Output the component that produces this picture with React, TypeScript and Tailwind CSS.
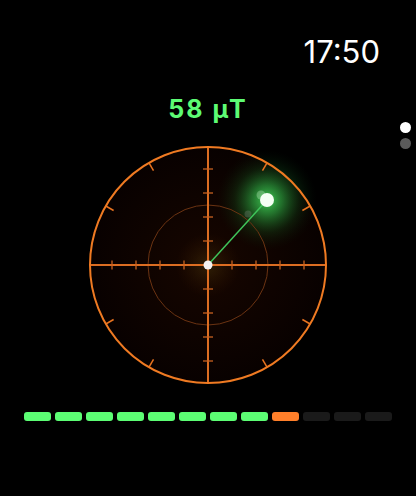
import React from "react";

const bars = [
  "g", "g", "g", "g", "g", "g", "g", "g", "o", "d", "d", "d",
];

function Radar() {
  const c = 120;
  const axisTicks = [-96, -72, -48, -24, 24, 48, 72, 96];
  const outerAngles = [30, 60, 120, 150, 210, 240, 300, 330];
  return (
    <svg width="240" height="240" viewBox="0 0 240 240" className="block">
      <defs>
        <radialGradient id="bg" cx="50%" cy="50%" r="50%">
          <stop offset="0%" stopColor="#170600" />
          <stop offset="100%" stopColor="#080100" />
        </radialGradient>
        <radialGradient id="center" cx="50%" cy="50%" r="50%">
          <stop offset="0%" stopColor="#4a3a0c" stopOpacity="0.5" />
          <stop offset="100%" stopColor="#3a1a00" stopOpacity="0" />
        </radialGradient>
        <radialGradient id="glow" cx="50%" cy="50%" r="50%">
          <stop offset="0%" stopColor="#4dff6a" stopOpacity="0.8" />
          <stop offset="30%" stopColor="#34c84e" stopOpacity="0.55" />
          <stop offset="65%" stopColor="#1c7f2c" stopOpacity="0.2" />
          <stop offset="100%" stopColor="#0a3010" stopOpacity="0" />
        </radialGradient>
      </defs>
      <circle cx={c} cy={c} r={118} fill="url(#bg)" />
      <circle cx={c} cy={c} r={32} fill="url(#center)" />
      <circle cx={179} cy={55} r={50} fill="url(#glow)" />
      <circle cx={c} cy={c} r={60} fill="none" stroke="#6b3312" strokeWidth="1" />
      <line x1={2} y1={c} x2={238} y2={c} stroke="#dc6d22" strokeWidth="2" />
      <line x1={c} y1={2} x2={c} y2={238} stroke="#dc6d22" strokeWidth="2" />
      {axisTicks.map((t) => (
        <g key={t}>
          <line x1={c + t} y1={c - 4.5} x2={c + t} y2={c + 4.5} stroke="#c9621f" strokeWidth="1.3" />
          <line x1={c - 5} y1={c + t} x2={c + 5} y2={c + t} stroke="#c9621f" strokeWidth="1.3" />
        </g>
      ))}
      {outerAngles.map((a) => {
        const rad = (a * Math.PI) / 180;
        const sx = Math.sin(rad);
        const sy = -Math.cos(rad);
        return (
          <line
            key={a}
            x1={c + sx * 109}
            y1={c + sy * 109}
            x2={c + sx * 118}
            y2={c + sy * 118}
            stroke="#e8731f"
            strokeWidth="1.5"
          />
        );
      })}
      <circle cx={c} cy={c} r={118} fill="none" stroke="#ef7a22" strokeWidth="2" />
      <line x1={c} y1={c} x2={179} y2={55} stroke="#3fc45a" strokeWidth="1.5" />
      <circle cx={160} cy={69} r={3.5} fill="#9a9a9a" opacity="0.25" />
      <circle cx={173} cy={50} r={4.5} fill="#d8ffd8" opacity="0.3" />
      <circle cx={179} cy={55} r={7} fill="#f4fff4" />
      <circle cx={c} cy={c} r={4.5} fill="#f2f2f2" />
    </svg>
  );
}

export default function App() {
  return (
    <div
      className="relative w-[416px] h-[496px] bg-black overflow-hidden flex flex-col items-center"
      style={{ fontFamily: "Inter, 'Liberation Sans', sans-serif" }}
    >
      <div className="w-full flex justify-end pr-[36px] pt-[36px]">
        <div className="text-white text-[31px] leading-none font-normal">17:50</div>
      </div>
      <div className="mt-[30px] text-[#5dfb74] text-[25px] leading-none font-bold tracking-[2px]">
        58 µT
      </div>
      <div className="mt-[23px]">
        <Radar />
      </div>
      <div className="mt-[27px] flex gap-[4px]">
        {bars.map((b, i) => (
          <div
            key={i}
            className={
              "w-[27px] h-[9px] rounded-[3px] " +
              (b === "g" ? "bg-[#5cfd74]" : b === "o" ? "bg-[#ff7f2a]" : "bg-[#1a1a1a]")
            }
          />
        ))}
      </div>
      <div className="absolute left-[400px] top-[122px] flex flex-col gap-[5px]">
        <div className="w-[11px] h-[11px] rounded-full bg-white" />
        <div className="w-[11px] h-[11px] rounded-full bg-[#5a5a5a]" />
      </div>
    </div>
  );
}
